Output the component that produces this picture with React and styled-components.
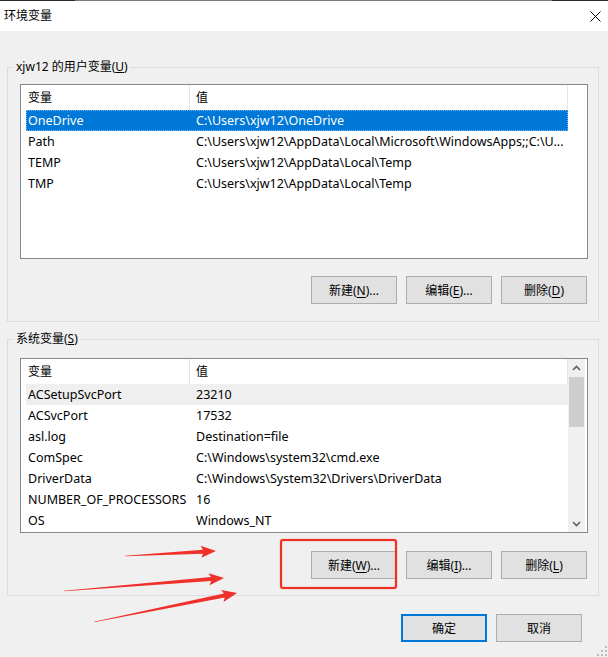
import React from 'react';
import styled, { createGlobalStyle } from 'styled-components';

const userVars = [
  { name: 'OneDrive', value: 'C:\\Users\\xjw12\\OneDrive', selected: true },
  { name: 'Path', value: 'C:\\Users\\xjw12\\AppData\\Local\\Microsoft\\WindowsApps;;C:\\U...' },
  { name: 'TEMP', value: 'C:\\Users\\xjw12\\AppData\\Local\\Temp' },
  { name: 'TMP', value: 'C:\\Users\\xjw12\\AppData\\Local\\Temp' },
];

const systemVars = [
  { name: 'ACSetupSvcPort', value: '23210', hover: true },
  { name: 'ACSvcPort', value: '17532' },
  { name: 'asl.log', value: 'Destination=file' },
  { name: 'ComSpec', value: 'C:\\Windows\\system32\\cmd.exe' },
  { name: 'DriverData', value: 'C:\\Windows\\System32\\Drivers\\DriverData' },
  { name: 'NUMBER_OF_PROCESSORS', value: '16' },
  { name: 'OS', value: 'Windows_NT' },
];

// red annotation arrows: tail -> tip
const arrows = [
  { from: [125, 556], to: [216, 551] },
  { from: [64, 591], to: [224, 578] },
  { from: [94, 622], to: [237, 593] },
];

const arrowPoints = ({ from, to }) => {
  const [x0, y0] = from;
  const [x1, y1] = to;
  const len = Math.hypot(x1 - x0, y1 - y0);
  const ux = (x1 - x0) / len;
  const uy = (y1 - y0) / len;
  const nx = -uy;
  const ny = ux;
  const hl = 13;
  const bx = x1 - ux * hl;
  const by = y1 - uy * hl;
  const wx = bx - ux * 2;
  const wy = by - uy * 2;
  const pts = [
    [x0 + nx * 0.3, y0 + ny * 0.3],
    [bx + nx * 2, by + ny * 2],
    [wx + nx * 6, wy + ny * 6],
    [x1, y1],
    [wx - nx * 6, wy - ny * 6],
    [bx - nx * 2, by - ny * 2],
    [x0 - nx * 0.3, y0 - ny * 0.3],
  ];
  return pts.map(([x, y]) => `${x.toFixed(1)},${y.toFixed(1)}`).join(' ');
};

const Chevron = ({ down }) => (
  <svg width="9" height="6" viewBox="0 0 9 6">
    <path
      d={down ? 'M1 1 L4.5 4.5 L8 1' : 'M1 5 L4.5 1.5 L8 5'}
      fill="none"
      stroke="#606060"
      strokeWidth="1.6"
    />
  </svg>
);

const VarList = ({ items, scroll }) => (
  <ListBox $mt={scroll ? 11 : 9}>
    <TableArea>
      <Header>
        <HeaderCell $pl={7}>变量</HeaderCell>
        <HeaderCell $pl={6}>值</HeaderCell>
      </Header>
      <Rows>
        {items.map((item) => (
          <Row key={item.name} $selected={item.selected} $hover={item.hover}>
            <Cell $pl={2}>{item.name}</Cell>
            <Cell $pl={6}>{item.value}</Cell>
          </Row>
        ))}
      </Rows>
    </TableArea>
    {scroll && (
      <Scrollbar>
        <ScrollButton><Chevron /></ScrollButton>
        <Track>
          <Thumb />
        </Track>
        <ScrollButton><Chevron down /></ScrollButton>
      </Scrollbar>
    )}
  </ListBox>
);

const App = () => {
  return (
    <>
      <GlobalStyle />
      <Window>
        <TitleBar>
          <Title>环境变量</Title>
          <svg width="11" height="11" viewBox="0 0 11 11">
            <path d="M0.5 0.5 L10.5 10.5 M10.5 0.5 L0.5 10.5" stroke="#000" strokeWidth="1" />
          </svg>
        </TitleBar>
        <Content>
          <Group $mt={0} $pb={17}>
            <Legend>xjw12 的用户变量(<u>U</u>)</Legend>
            <VarList items={userVars} />
            <ButtonRow $mt={17} $pr={1}>
              <Button>新建(<u>N</u>)...</Button>
              <Button>编辑(<u>E</u>)...</Button>
              <Button>删除(<u>D</u>)</Button>
            </ButtonRow>
          </Group>
          <Group $mt={17} $pb={16}>
            <Legend>系统变量(<u>S</u>)</Legend>
            <VarList items={systemVars} scroll />
            <ButtonRow $mt={18} $pr={1}>
              <Button>新建(<u>W</u>)...</Button>
              <Button>编辑(<u>I</u>)...</Button>
              <Button>删除(<u>L</u>)</Button>
            </ButtonRow>
          </Group>
          <ButtonRow $mt={18} $pr={17}>
            <Button $default>确定</Button>
            <Button>取消</Button>
          </ButtonRow>
        </Content>

        <HighlightBox />
        <Annotations width="608" height="657" viewBox="0 0 608 657">
          {arrows.map((a, i) => (
            <polygon key={i} points={arrowPoints(a)} fill="#f0302a" />
          ))}
        </Annotations>
        <Grip width="12" height="12" viewBox="0 0 12 12">
          {[[9, 1], [9, 5], [5, 5], [9, 9], [5, 9], [1, 9]].map(([x, y]) => (
            <rect key={`${x}-${y}`} x={x} y={y} width="2" height="2" fill="#bdbdbd" />
          ))}
        </Grip>
      </Window>
    </>
  );
};

const GlobalStyle = createGlobalStyle`
  html, body {
    margin: 0;
    padding: 0;
    background: #f0f0f0;
  }

  body {
    font-family: "Noto Sans", "Noto Sans CJK SC", sans-serif;
    font-size: 12px;
    color: #000;
  }
`;

const Window = styled.div`
  position: relative;
  width: 608px;
  height: 657px;
  background: #f0f0f0;
  overflow: hidden;
`;

const TitleBar = styled.div`
  height: 31px;
  box-sizing: border-box;
  display: flex;
  align-items: center;
  justify-content: space-between;
  padding: 1px 7px 0 4px;
  background:
    linear-gradient(to right, #2b2b2b 0 75px, #7a7a7a 75px 552px, #2b2b2b 552px) top / 100% 1px no-repeat,
    #fff;
`;

const Title = styled.span`
  font-size: 12px;
  line-height: 16px;
  color: #000;
`;

const Content = styled.div`
  padding: 36px 9px 0 7px;
`;

const Group = styled.div`
  margin-top: ${(p) => p.$mt}px;
  border: 1px solid #dcdcdc;
  padding: 0 10px ${(p) => p.$pb}px 12px;
`;

const Legend = styled.div`
  width: fit-content;
  margin: -9px 0 0 -7px;
  padding: 0 2px 0 3px;
  line-height: 16px;
  background: #f0f0f0;
  color: #000;
`;

const ListBox = styled.div`
  margin-top: ${(p) => p.$mt}px;
  height: 175px;
  box-sizing: border-box;
  border: 1px solid #828790;
  background: #fff;
  display: flex;
`;

const TableArea = styled.div`
  width: 547px;
  flex-shrink: 0;
`;

const Header = styled.div`
  display: grid;
  grid-template-columns: 169px 1fr;
  height: 25px;
`;

const HeaderCell = styled.div`
  padding-left: ${(p) => p.$pl}px;
  line-height: 25px;
  border-right: 1px solid #e5e5e5;
  white-space: nowrap;
`;

const Rows = styled.div`
  padding-left: 5px;
`;

const Row = styled.div`
  display: grid;
  grid-template-columns: 164px 1fr;
  height: 21px;
  line-height: 21px;
  font-size: 12.5px;
  background: ${(p) => (p.$selected ? '#0078d7' : p.$hover ? '#efefef' : 'transparent')};
  color: ${(p) => (p.$selected ? '#fff' : '#000')};
  outline: ${(p) => (p.$selected ? '1px dotted rgba(255, 255, 255, 0.45)' : 'none')};
  outline-offset: -1px;
`;

const Cell = styled.div`
  padding-left: ${(p) => p.$pl}px;
  white-space: nowrap;
  overflow: hidden;
  text-overflow: ellipsis;
`;

const Scrollbar = styled.div`
  width: 17px;
  background: #f0f0f0;
  display: flex;
  flex-direction: column;
`;

const ScrollButton = styled.div`
  height: 17px;
  display: flex;
  align-items: center;
  justify-content: center;
`;

const Track = styled.div`
  flex: 1;
`;

const Thumb = styled.div`
  height: 50px;
  margin: 1px 1px 0;
  background: #cdcdcd;
`;

const ButtonRow = styled.div`
  display: flex;
  justify-content: flex-end;
  gap: 9px;
  margin-top: ${(p) => p.$mt}px;
  padding-right: ${(p) => p.$pr}px;
`;

const Button = styled.button`
  width: 86px;
  height: 28px;
  box-sizing: border-box;
  padding: 0;
  background: #e1e1e1;
  border: ${(p) => (p.$default ? '2px solid #0078d7' : '1px solid #adadad')};
  border-radius: 0;
  font-family: inherit;
  font-size: 12px;
  color: #000;
  cursor: default;

  u {
    text-underline-offset: 2px;
  }
`;

const HighlightBox = styled.div`
  position: absolute;
  left: 280px;
  top: 539px;
  width: 117px;
  height: 50px;
  box-sizing: border-box;
  border: 2px solid #ee3024;
  border-radius: 3px;
  box-shadow: 0 0 1px #ee3024, inset 0 0 1px #ee3024;
  pointer-events: none;
`;

const Annotations = styled.svg`
  position: absolute;
  left: 0;
  top: 0;
  pointer-events: none;
`;

const Grip = styled.svg`
  position: absolute;
  right: 0;
  bottom: 0;
`;

export default App;
